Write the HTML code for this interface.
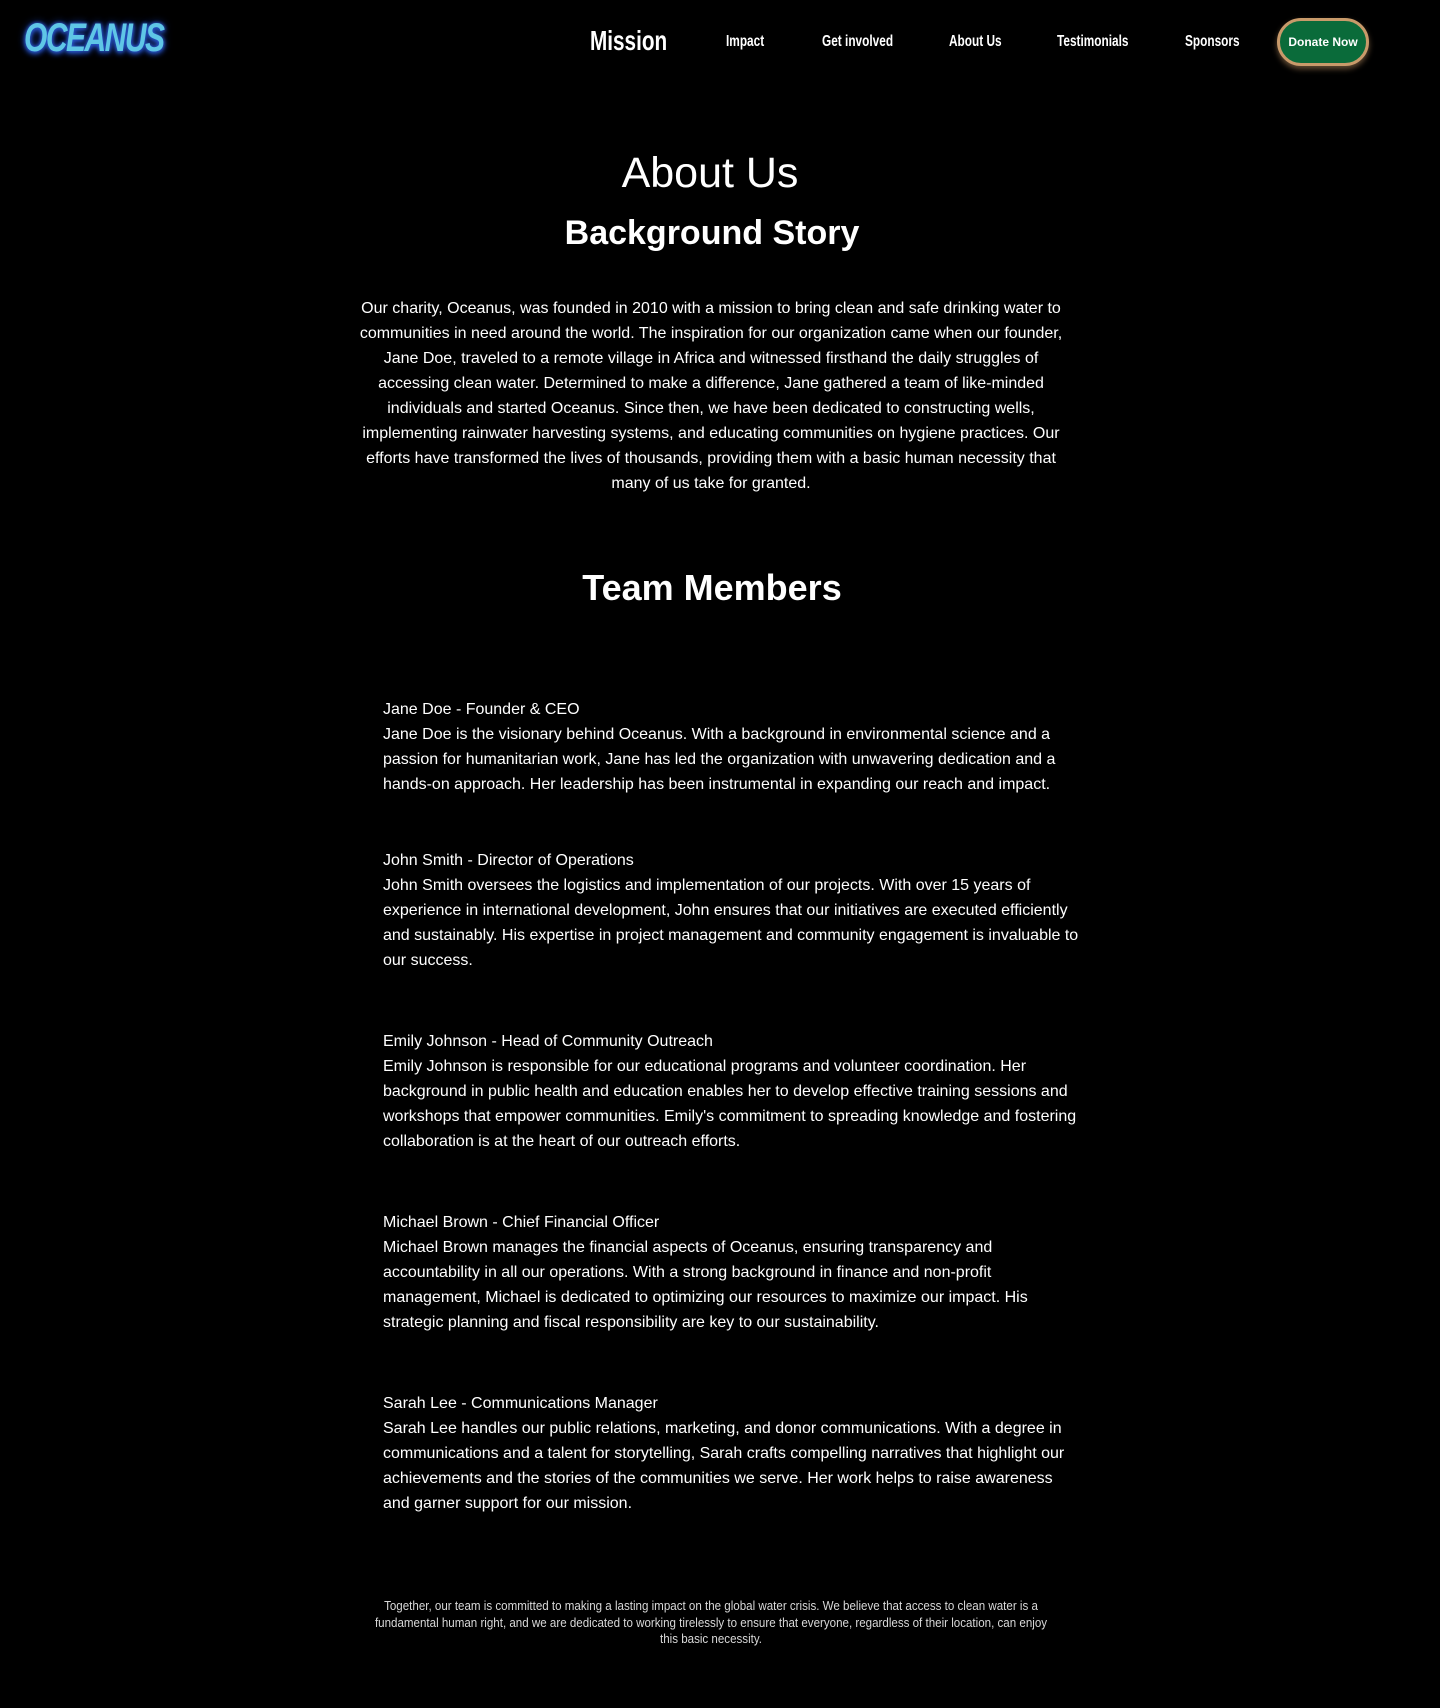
<!DOCTYPE html>
<html><head><meta charset="utf-8">
<style>
html,body{margin:0;padding:0;background:#000;color:#fff;}
body{width:1440px;height:1708px;position:relative;overflow:hidden;font-family:"Liberation Sans",sans-serif;}
.logo{position:absolute;left:24px;top:16px;font-weight:bold;font-style:italic;font-size:40px;color:#5fc6e6;letter-spacing:-2px;text-shadow:0 0 4px #2b5bd8,0 2px 6px #2b5bd8,0 0 10px #1e3fa0;transform:scaleX(0.75);transform-origin:left;}
.nav{position:absolute;font-weight:bold;color:#fff;white-space:nowrap;transform:scaleX(0.74);transform-origin:left;}
.n{font-size:16px;top:33px;}
.donate{position:absolute;left:1277px;top:18px;width:86px;height:42px;border:3px solid #c89a6a;border-radius:24px;background:#0a6b3a;color:#fff;font-size:12px;font-weight:bold;display:flex;align-items:center;justify-content:center;box-shadow:0 3px 6px rgba(200,154,106,.5);}
.c{position:absolute;left:0;width:1440px;text-align:center;}
.p{position:absolute;left:359px;width:704px;text-align:center;font-size:16px;line-height:25px;}
.t{position:absolute;left:383px;width:700px;font-size:16px;line-height:25px;}
.f{position:absolute;left:331px;width:760px;text-align:center;font-size:13px;line-height:16.5px;color:#d8d8d8;transform:scaleX(0.89);transform-origin:center;}
</style></head><body>
<div class="logo">OCEANUS</div>
<div class="nav" style="left:590px;top:25px;font-size:28px;">Mission</div>
<div class="nav n" style="left:726px;">Impact</div>
<div class="nav n" style="left:822px;">Get involved</div>
<div class="nav n" style="left:949px;">About Us</div>
<div class="nav n" style="left:1057px;">Testimonials</div>
<div class="nav n" style="left:1185px;">Sponsors</div>
<div class="donate">Donate Now</div>

<div class="c" style="top:145px;font-size:43px;line-height:56px;left:-10px;">About Us</div>
<div class="c" style="top:211px;font-size:34px;font-weight:bold;line-height:44px;left:-8px;">Background Story</div>

<div class="p" style="top:296px;">Our charity, Oceanus, was founded in 2010 with a mission to bring clean and safe drinking water to communities in need around the world. The inspiration for our organization came when our founder, Jane Doe, traveled to a remote village in Africa and witnessed firsthand the daily struggles of accessing clean water. Determined to make a difference, Jane gathered a team of like-minded individuals and started Oceanus. Since then, we have been dedicated to constructing wells, implementing rainwater harvesting systems, and educating communities on hygiene practices. Our efforts have transformed the lives of thousands, providing them with a basic human necessity that many of us take for granted.</div>

<div class="c" style="top:566px;font-size:36px;font-weight:bold;line-height:44px;left:-8px;">Team Members</div>

<div class="t" style="top:697px;">Jane Doe - Founder &amp; CEO<br>Jane Doe is the visionary behind Oceanus. With a background in environmental science and a passion for humanitarian work, Jane has led the organization with unwavering dedication and a hands-on approach. Her leadership has been instrumental in expanding our reach and impact.</div>
<div class="t" style="top:848px;">John Smith - Director of Operations<br>John Smith oversees the logistics and implementation of our projects. With over 15 years of experience in international development, John ensures that our initiatives are executed efficiently and sustainably. His expertise in project management and community engagement is invaluable to our success.</div>
<div class="t" style="top:1029px;">Emily Johnson - Head of Community Outreach<br>Emily Johnson is responsible for our educational programs and volunteer coordination. Her background in public health and education enables her to develop effective training sessions and workshops that empower communities. Emily's commitment to spreading knowledge and fostering collaboration is at the heart of our outreach efforts.</div>
<div class="t" style="top:1210px;">Michael Brown - Chief Financial Officer<br>Michael Brown manages the financial aspects of Oceanus, ensuring transparency and accountability in all our operations. With a strong background in finance and non-profit management, Michael is dedicated to optimizing our resources to maximize our impact. His strategic planning and fiscal responsibility are key to our sustainability.</div>
<div class="t" style="top:1391px;">Sarah Lee - Communications Manager<br>Sarah Lee handles our public relations, marketing, and donor communications. With a degree in communications and a talent for storytelling, Sarah crafts compelling narratives that highlight our achievements and the stories of the communities we serve. Her work helps to raise awareness and garner support for our mission.</div>

<div class="f" style="top:1598px;">Together, our team is committed to making a lasting impact on the global water crisis. We believe that access to clean water is a fundamental human right, and we are dedicated to working tirelessly to ensure that everyone, regardless of their location, can enjoy this basic necessity.</div>
</body></html>
